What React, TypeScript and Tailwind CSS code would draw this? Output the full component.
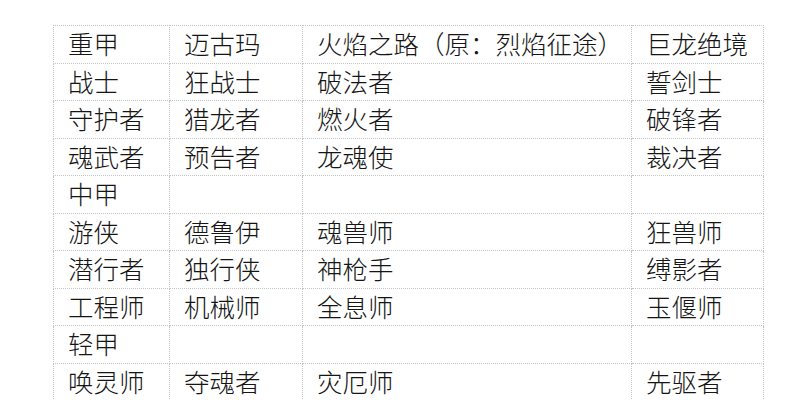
const rows: string[][] = [
  ["重甲", "迈古玛", "火焰之路（原：烈焰征途）", "巨龙绝境"],
  ["战士", "狂战士", "破法者", "誓剑士"],
  ["守护者", "猎龙者", "燃火者", "破锋者"],
  ["魂武者", "预告者", "龙魂使", "裁决者"],
  ["中甲", "", "", ""],
  ["游侠", "德鲁伊", "魂兽师", "狂兽师"],
  ["潜行者", "独行侠", "神枪手", "缚影者"],
  ["工程师", "机械师", "全息师", "玉偃师"],
  ["轻甲", "", "", ""],
  ["唤灵师", "夺魂者", "灾厄师", "先驱者"],
];

const widths = ["w-[116px]", "w-[133px]", "w-[329px]", "w-[132px]"];

export default function App() {
  return (
    <div className="w-[806px] h-[400px] overflow-hidden bg-white pt-[25px] pl-[53px]">
      <table
        className="border-collapse table-fixed text-[25.5px] leading-none text-[#151515]"
        style={{ fontFamily: '"Noto Sans CJK SC", "Noto Sans", sans-serif' }}
      >
        <colgroup>
          {widths.map((w, i) => (
            <col key={i} className={w} />
          ))}
        </colgroup>
        <tbody>
          {rows.map((r, i) => (
            <tr key={i} className="h-[37.5px]">
              {r.map((c, j) => (
                <td
                  key={j}
                  className="border border-dotted border-[#c4c4c4] pl-[14px] pr-0 pt-0 pb-[3px] align-middle whitespace-nowrap font-light"
                >
                  {c}
                </td>
              ))}
            </tr>
          ))}
        </tbody>
      </table>
    </div>
  );
}
